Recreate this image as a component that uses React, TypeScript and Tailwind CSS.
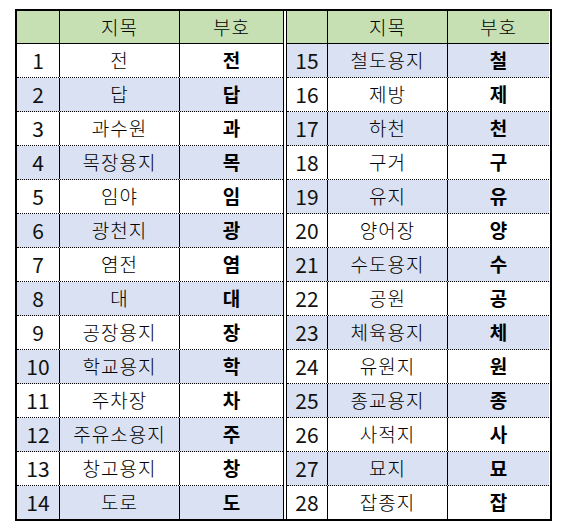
const left: [number, string, string][] = [
  [1, "전", "전"],
  [2, "답", "답"],
  [3, "과수원", "과"],
  [4, "목장용지", "목"],
  [5, "임야", "임"],
  [6, "광천지", "광"],
  [7, "염전", "염"],
  [8, "대", "대"],
  [9, "공장용지", "장"],
  [10, "학교용지", "학"],
  [11, "주차장", "차"],
  [12, "주유소용지", "주"],
  [13, "창고용지", "창"],
  [14, "도로", "도"],
];

const right: [number, string, string][] = [
  [15, "철도용지", "철"],
  [16, "제방", "제"],
  [17, "하천", "천"],
  [18, "구거", "구"],
  [19, "유지", "유"],
  [20, "양어장", "양"],
  [21, "수도용지", "수"],
  [22, "공원", "공"],
  [23, "체육용지", "체"],
  [24, "유원지", "원"],
  [25, "종교용지", "종"],
  [26, "사적지", "사"],
  [27, "묘지", "묘"],
  [28, "잡종지", "잡"],
];

function Block({
  rows,
  widths,
  side,
}: {
  rows: [number, string, string][];
  widths: [string, string, string];
  side: "left" | "right";
}) {
  return (
    <div className={side === "left" ? "border-r border-black" : "border-l border-black"}>
      <div className="flex h-[33px] bg-[#c6e0b4] border-b border-black text-[19px] font-light text-black">
        <div className={`${widths[0]} border-r border-black`} />
        <div className={`${widths[1]} border-r border-black flex items-center justify-center tracking-[1px]`}>지목</div>
        <div className={`${widths[2]} flex items-center justify-center tracking-[1px]`}>부호</div>
      </div>
      {rows.map(([n, name, code], i) => {
        // left block starts white, right block starts blue
        const blue = side === "left" ? i % 2 === 1 : i % 2 === 0;
        const last = i === rows.length - 1;
        return (
          <div
            key={n}
            className={`flex text-[19px] ${last ? "h-[33px]" : "h-[34px] border-b border-dotted border-black"} ${
              blue ? "bg-[#d9e1f2]" : "bg-white"
            }`}
          >
            <div className={`${widths[0]} border-r border-black flex items-center justify-center text-[21px] text-[#111]`}>
              {n}
            </div>
            <div
              className={`${widths[1]} border-r border-black flex items-center justify-center font-light text-black tracking-[1px]`}
            >
              {name}
            </div>
            <div className={`${widths[2]} flex items-center justify-center font-bold text-black`}>{code}</div>
          </div>
        );
      })}
    </div>
  );
}

export default function App() {
  return (
    <div
      className="min-h-screen bg-white pt-[9px] pl-[15px]"
      style={{ fontFamily: '"Noto Sans CJK KR", "Noto Sans", sans-serif' }}
    >
      <div className="flex w-[537px] border-2 border-black">
        <Block rows={left} widths={["w-[43px]", "w-[120px]", "w-[103px]"]} side="left" />
        <div className="w-[2px] bg-white" />
        <Block rows={right} widths={["w-[41px]", "w-[120px]", "w-[101px]"]} side="right" />
      </div>
    </div>
  );
}
